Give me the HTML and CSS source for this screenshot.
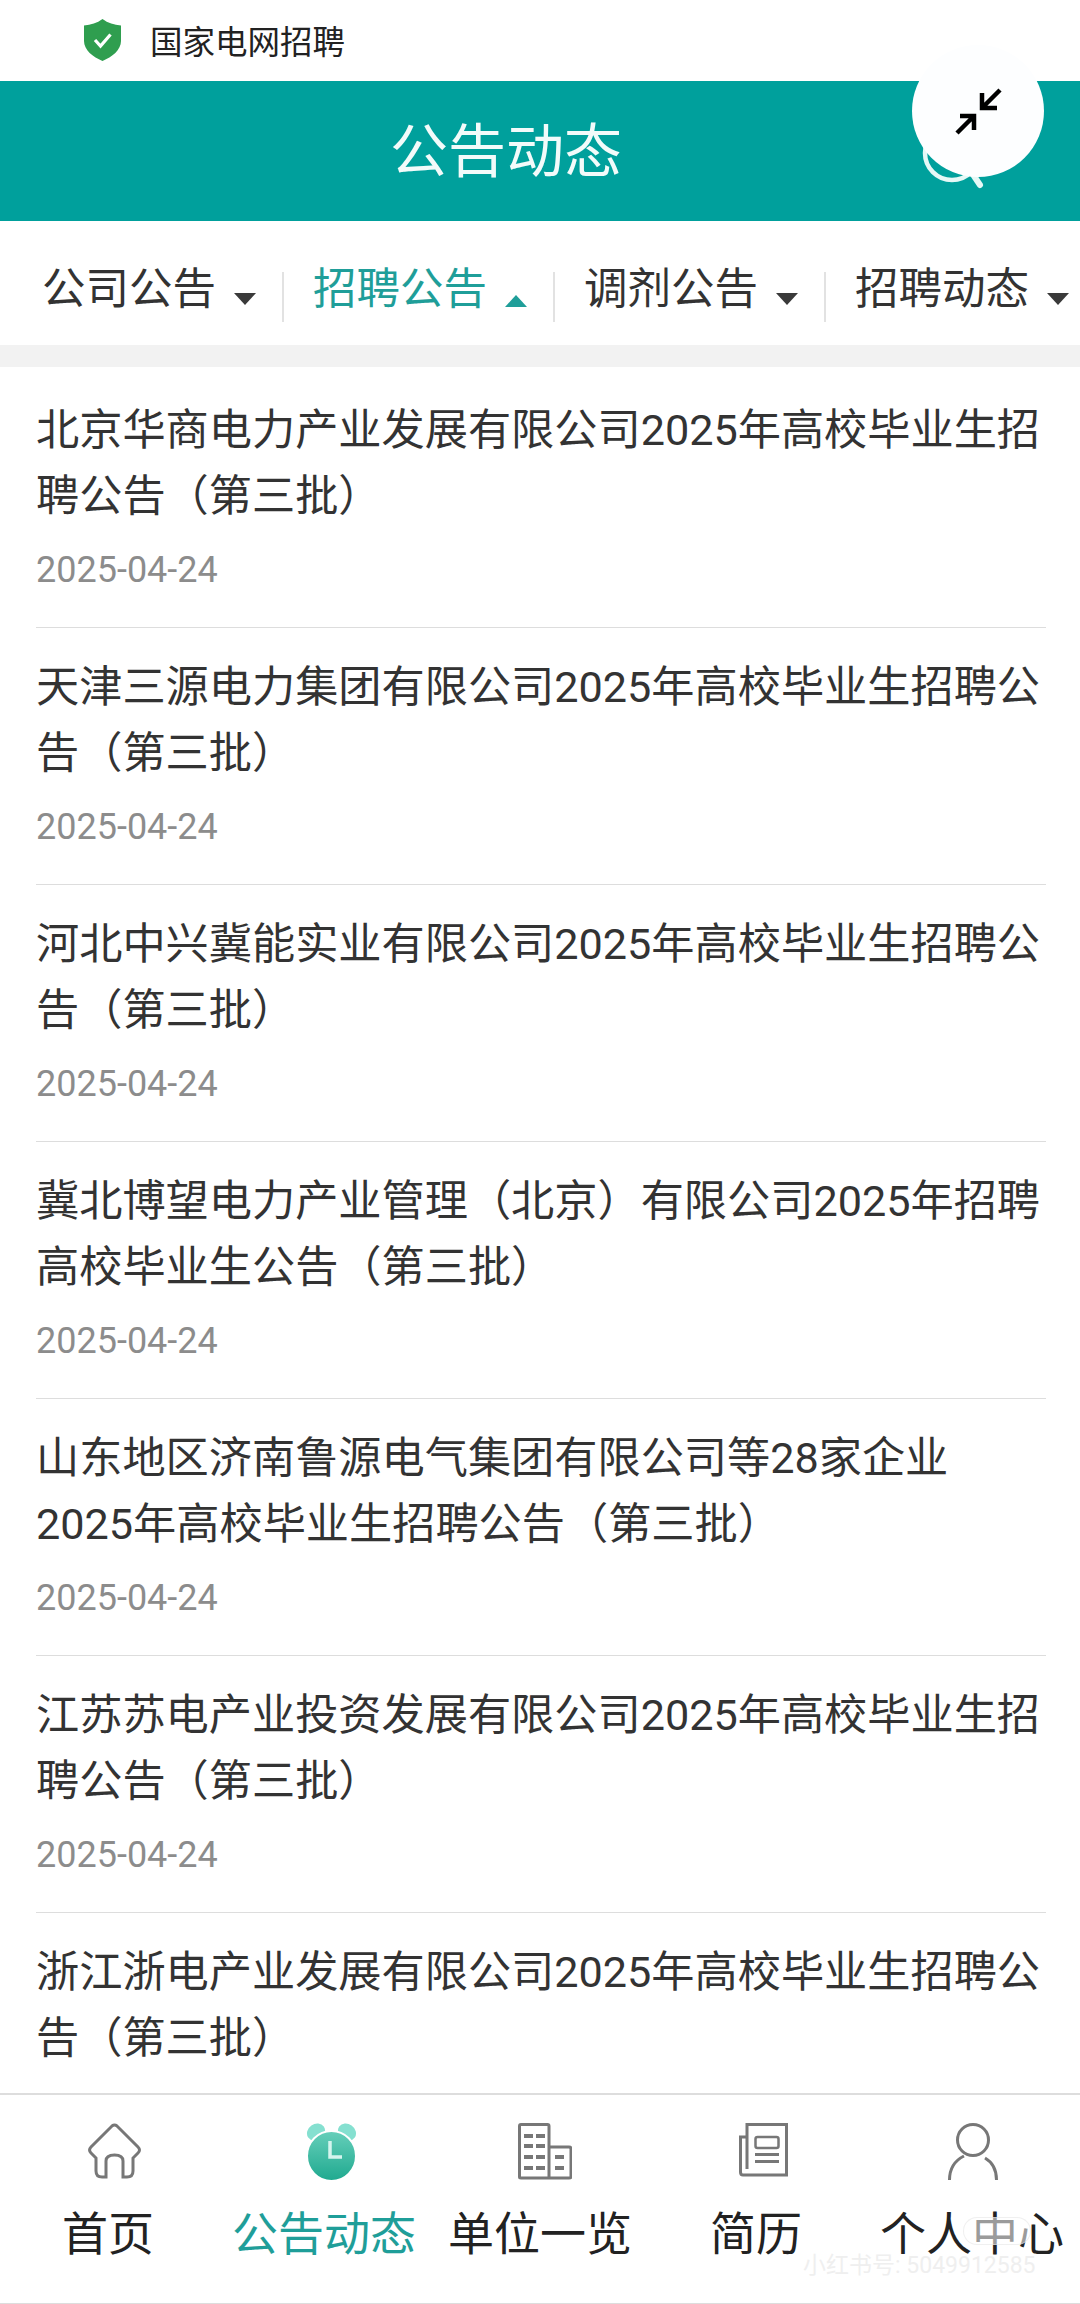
FILE: index.html
```html
<!DOCTYPE html>
<html lang="zh-CN">
  <head>
    <meta charset="UTF-8" />
    <meta name="viewport" content="width=device-width, initial-scale=1.0" />
    <title>公告动态</title>
    <link rel="stylesheet" href="styles.css">
  </head>
  <body>
    <div class="app">
      <div class="site-bar">
        <svg class="shield" viewBox="0 0 39 42">
          <path d="M19.5 0 C25 4 31 6 38 6.5 V22 C38 31 29 38 19.5 42 C10 38 1 31 1 22 V6.5 C8 6 14 4 19.5 0 Z" fill="#2f9e4f" />
          <path d="M12 21 L17.5 27 L27.5 15.5" fill="none" stroke="#ffffff" stroke-width="3.2" />
        </svg>
        <span>国家电网招聘</span>
      </div>

      <header class="title-bar">
        <h1>公告动态</h1>
        <!-- search icon, mostly covered by the floating button -->
        <svg class="search-icon" viewBox="0 0 70 70">
          <circle cx="30" cy="28" r="27" fill="none" stroke="#e6f8f6" stroke-width="4.5" />
          <path d="M50 48 L58 60" fill="none" stroke="#e6f8f6" stroke-width="6" stroke-linecap="round" />
        </svg>
      </header>

      <nav class="tabs">
        <div class="tab"><span>公司公告</span><i class="caret"></i></div>
        <div class="tab active"><span>招聘公告</span><i class="caret up"></i></div>
        <div class="tab"><span>调剂公告</span><i class="caret"></i></div>
        <div class="tab"><span>招聘动态</span><i class="caret"></i></div>
      </nav>

      <main class="notice-list">
        <article class="notice">
          <h2>北京华商电力产业发展有限公司2025年高校毕业生招聘公告（第三批）</h2>
          <time>2025-04-24</time>
        </article>
        <article class="notice">
          <h2>天津三源电力集团有限公司2025年高校毕业生招聘公告（第三批）</h2>
          <time>2025-04-24</time>
        </article>
        <article class="notice">
          <h2>河北中兴冀能实业有限公司2025年高校毕业生招聘公告（第三批）</h2>
          <time>2025-04-24</time>
        </article>
        <article class="notice">
          <h2>冀北博望电力产业管理（北京）有限公司2025年招聘高校毕业生公告（第三批）</h2>
          <time>2025-04-24</time>
        </article>
        <article class="notice">
          <h2>山东地区济南鲁源电气集团有限公司等28家企业<br />2025年高校毕业生招聘公告（第三批）</h2>
          <time>2025-04-24</time>
        </article>
        <article class="notice">
          <h2>江苏苏电产业投资发展有限公司2025年高校毕业生招聘公告（第三批）</h2>
          <time>2025-04-24</time>
        </article>
        <article class="notice">
          <h2>浙江浙电产业发展有限公司2025年高校毕业生招聘公告（第三批）</h2>
        </article>
      </main>

      <footer class="bottom-nav">
        <div class="nav-item">
          <svg class="nav-icon home" viewBox="0 0 54 57">
            <path d="M8 35 L3 30 Q0 27 3 24 L24 3 Q26.5 1 29 3 L50 24 Q53 27 50 30 L45 35 V48 Q45 54 39 54 H35 V38 Q35 32 26.5 32 Q18 32 18 38 V54 H14 Q8 54 8 48 Z" fill="none" stroke="#777777" stroke-width="3" />
          </svg>
          <span>首页</span>
        </div>
        <div class="nav-item active">
          <svg class="nav-icon clock" viewBox="0 0 52 57">
            <defs>
              <linearGradient id="clockFill" x1="0" y1="0" x2="0" y2="1">
                <stop offset="0" stop-color="#66cfba" />
                <stop offset="1" stop-color="#1fa98f" />
              </linearGradient>
            </defs>
            <ellipse cx="10" cy="9" rx="9.5" ry="8" fill="#85e0d0" transform="rotate(-35 10 9)" />
            <ellipse cx="41" cy="9" rx="9.5" ry="8" fill="#85e0d0" transform="rotate(35 41 9)" />
            <ellipse cx="25.5" cy="33" rx="24.5" ry="25" fill="url(#clockFill)" stroke="#ffffff" stroke-width="2" />
            <path d="M24 18 V34 H36" fill="none" stroke="#d5f5ee" stroke-width="3.5" />
          </svg>
          <span>公告动态</span>
        </div>
        <div class="nav-item">
          <svg class="nav-icon building" viewBox="0 0 54 57">
            <path d="M31 54 V3 Q31 1.5 29.5 1.5 H3 Q1.5 1.5 1.5 3 V54 Q1.5 55 3 55 H51 Q53 55 53 54 V26 Q53 24 51 24 H31" fill="none" stroke="#777777" stroke-width="3" />
            <path d="M6 11 H15 V15 H6 Z M18 11 H27 V15 H18 Z M6 21 H15 V25 H6 Z M18 21 H27 V25 H18 Z M6 32 H15 V36 H6 Z M18 32 H27 V36 H18 Z M6 43 H15 V47 H6 Z M18 43 H27 V47 H18 Z M37 32 H46 V36 H37 Z M37 43 H46 V47 H37 Z" fill="#777777" />
          </svg>
          <span>单位一览</span>
        </div>
        <div class="nav-item">
          <svg class="nav-icon resume" viewBox="0 0 49 57">
            <path d="M8 1.5 H47.5 V52 H4 Q1.5 52 1.5 49 V14 H8 Z M8 14 V46" fill="none" stroke="#777777" stroke-width="3" />
            <rect x="16.5" y="14" width="23" height="11" rx="2" fill="none" stroke="#777777" stroke-width="2.5" />
            <path d="M16 31.5 H40 M16 38.5 H40" fill="none" stroke="#777777" stroke-width="3" />
          </svg>
          <span>简历</span>
        </div>
        <div class="nav-item">
          <svg class="nav-icon person" viewBox="0 0 50 57">
            <circle cx="25" cy="17" r="15.5" fill="none" stroke="#777777" stroke-width="3" />
            <path d="M1.5 57 C1.5 45 8 37 16 33 M37 35 C44 39 48.5 46 48.5 57" fill="none" stroke="#777777" stroke-width="3" />
          </svg>
          <span>个人中心</span>
        </div>
      </footer>

      <!-- overlays -->
      <div class="float-button">
        <svg viewBox="0 0 132 132">
          <path d="M88 45 L70 63 M70 48 V63 H85" fill="none" stroke="#000000" stroke-width="4.5" />
          <path d="M45 88 L62 71 M48 71 H62 V85" fill="none" stroke="#000000" stroke-width="4.5" />
        </svg>
      </div>
      <div class="wm-pill"></div>
      <div class="watermark">小红书号: 5049912585</div>
    </div>
  </body>
</html>
```

FILE: styles.css
```css
* {
  box-sizing: border-box;
  margin: 0;
  padding: 0;
}

html,
body {
  height: 100%;
  overflow: hidden;
}

body {
  font-family: Roboto, "Noto Sans CJK SC", sans-serif;
  background-color: #ffffff;
  color: #333333;
}

.app {
  position: relative;
  display: flex;
  flex-direction: column;
  width: 1080px;
  height: 2304px;
  overflow: hidden;
}

/* top site bar */
.site-bar {
  display: flex;
  align-items: center;
  flex-shrink: 0;
  gap: 28px;
  height: 81px;
  padding: 0 0 2px 83px;
  font-size: 32.5px;
  color: #222222;
}
.shield {
  width: 39px;
  height: 42px;
}

/* teal title bar */
.title-bar {
  position: relative;
  display: flex;
  align-items: center;
  justify-content: center;
  flex-shrink: 0;
  height: 140px;
  padding: 0 68px 8px 0;
  background-color: #00a09c;
}
.title-bar h1 {
  font-size: 58px;
  font-weight: 400;
  color: #f2fbfa;
}
.search-icon {
  position: absolute;
  left: 922px;
  top: 44px;
  width: 70px;
  height: 70px;
}

/* tabs */
.tabs {
  display: flex;
  align-items: flex-start;
  flex-shrink: 0;
  height: 124px;
  padding: 51px 0 0 13px;
}
.tab {
  display: flex;
  flex-shrink: 0;
  align-items: flex-start;
  width: 271px;
  height: 50px;
  padding-left: 29px;
  border-right: 2px solid #e2e2e2;
  font-size: 43.5px;
  line-height: 36px;
  color: #333333;
  white-space: nowrap;
}
.tab:last-child {
  border-right: none;
}
.tab.active {
  color: #1f9e99;
}
.caret {
  width: 0;
  height: 0;
  margin: 21px 0 0 18px;
  border-left: 11px solid transparent;
  border-right: 11px solid transparent;
  border-top: 12px solid #3a3a3a;
}
.caret.up {
  margin-top: 23px;
  border-top: none;
  border-bottom: 12px solid #1f9e99;
}

/* notice list */
.notice-list {
  flex: 1;
  min-height: 0;
  overflow: hidden;
  padding-top: 4px;
  border-top: 22px solid #f2f2f2;
}
.notice {
  margin: 0 34px 0 36px;
  padding: 27px 0 35px;
  border-bottom: 1px solid #dddddd;
}
.notice:last-child {
  padding-bottom: 0;
  border-bottom: none;
}
.notice h2 {
  font-size: 43.2px;
  font-weight: 400;
  line-height: 66px;
  color: #333333;
}
.notice time {
  display: block;
  margin-top: 18px;
  font-size: 36px;
  line-height: 44px;
  color: #8c8c8c;
}

/* bottom navigation */
.bottom-nav {
  display: grid;
  grid-template-columns: repeat(5, 1fr);
  flex-shrink: 0;
  height: 211px;
  padding-top: 28px;
  border-top: 2px solid #dddddd;
  border-bottom: 1px solid #dddddd;
  background-color: #ffffff;
}
.nav-item {
  display: flex;
  flex-direction: column;
  align-items: center;
  font-size: 46px;
  line-height: 40px;
  color: #222222;
  white-space: nowrap;
}
.nav-item.active {
  color: #1f9e99;
}
.nav-item span {
  margin-top: 34px;
}
.nav-icon {
  display: block;
  height: 57px;
}
.nav-icon.home {
  width: 54px;
  margin-left: 13px;
}
.nav-icon.clock {
  width: 52px;
  margin-left: 16px;
}
.nav-icon.building {
  width: 54px;
  margin-left: 10px;
}
.nav-icon.resume {
  width: 49px;
  margin-left: 14px;
}
.nav-icon.person {
  width: 50px;
  margin-left: 2px;
}

/* floating collapse button */
.float-button {
  position: absolute;
  left: 912px;
  top: 45px;
  width: 132px;
  height: 132px;
  border-radius: 50%;
  background-color: #fdfeff;
}
.float-button svg {
  display: block;
  width: 100%;
  height: 100%;
}

/* image watermark */
.wm-pill {
  position: absolute;
  left: 963px;
  top: 2217px;
  width: 68px;
  height: 28px;
  border-radius: 14px;
  background-color: rgba(255, 255, 255, 0.55);
  border: 1px solid rgba(225, 225, 225, 0.5);
}
.watermark {
  position: absolute;
  left: 803px;
  top: 2256px;
  font-size: 23px;
  line-height: 20px;
  color: #efefef;
  white-space: nowrap;
}
```
